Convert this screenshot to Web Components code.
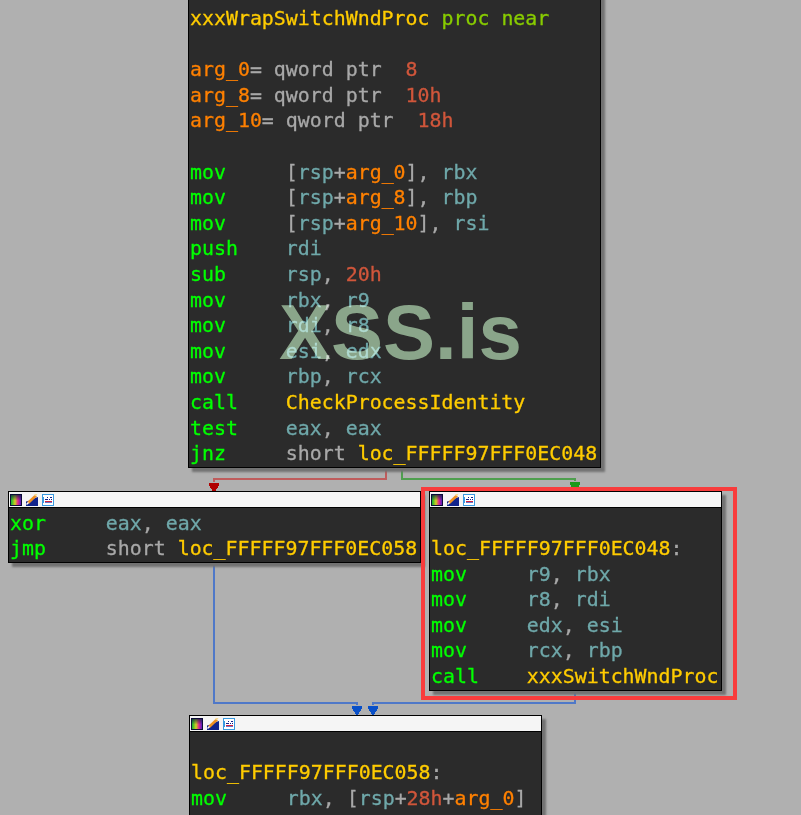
<!doctype html>
<html>
<head>
<meta charset="utf-8">
<title>graph</title>
<style>
html, body { margin: 0; padding: 0; background: #b0b0b0; }
</style>
</head>
<body>
<graph-canvas>
  <graph-edges></graph-edges>

  <graph-node bare x="188" y="-23" w="413">
    <asm-line></asm-line>
    <asm-line><span class="name">xxxWrapSwitchWndProc</span> <span class="kw">proc near</span></asm-line>
    <asm-line></asm-line>
    <asm-line><span class="arg">arg_0</span>= qword ptr  <span class="num">8</span></asm-line>
    <asm-line><span class="arg">arg_8</span>= qword ptr  <span class="num">10h</span></asm-line>
    <asm-line><span class="arg">arg_10</span>= qword ptr  <span class="num">18h</span></asm-line>
    <asm-line></asm-line>
    <asm-line><span class="op">mov     </span>[<span class="reg">rsp</span>+<span class="arg">arg_0</span>], <span class="reg">rbx</span></asm-line>
    <asm-line><span class="op">mov     </span>[<span class="reg">rsp</span>+<span class="arg">arg_8</span>], <span class="reg">rbp</span></asm-line>
    <asm-line><span class="op">mov     </span>[<span class="reg">rsp</span>+<span class="arg">arg_10</span>], <span class="reg">rsi</span></asm-line>
    <asm-line><span class="op">push    </span><span class="reg">rdi</span></asm-line>
    <asm-line><span class="op">sub     </span><span class="reg">rsp</span>, <span class="num">20h</span></asm-line>
    <asm-line><span class="op">mov     </span><span class="reg">rbx</span>, <span class="reg">r9</span></asm-line>
    <asm-line><span class="op">mov     </span><span class="reg">rdi</span>, <span class="reg">r8</span></asm-line>
    <asm-line><span class="op">mov     </span><span class="reg">esi</span>, <span class="reg">edx</span></asm-line>
    <asm-line><span class="op">mov     </span><span class="reg">rbp</span>, <span class="reg">rcx</span></asm-line>
    <asm-line><span class="op">call    </span><span class="name">CheckProcessIdentity</span></asm-line>
    <asm-line><span class="op">test    </span><span class="reg">eax</span>, <span class="reg">eax</span></asm-line>
    <asm-line><span class="op">jnz     </span>short <span class="name">loc_FFFFF97FFF0EC048</span></asm-line>
  </graph-node>

  <graph-node x="8" y="491" w="413">
    <asm-line><span class="op">xor     </span><span class="reg">eax</span>, <span class="reg">eax</span></asm-line>
    <asm-line><span class="op">jmp     </span>short <span class="name">loc_FFFFF97FFF0EC058</span></asm-line>
  </graph-node>

  <graph-node x="429" y="491" w="293">
    <asm-line></asm-line>
    <asm-line><span class="name">loc_FFFFF97FFF0EC048</span>:</asm-line>
    <asm-line><span class="op">mov     </span><span class="reg">r9</span>, <span class="reg">rbx</span></asm-line>
    <asm-line><span class="op">mov     </span><span class="reg">r8</span>, <span class="reg">rdi</span></asm-line>
    <asm-line><span class="op">mov     </span><span class="reg">edx</span>, <span class="reg">esi</span></asm-line>
    <asm-line><span class="op">mov     </span><span class="reg">rcx</span>, <span class="reg">rbp</span></asm-line>
    <asm-line><span class="op">call    </span><span class="name">xxxSwitchWndProc</span></asm-line>
  </graph-node>

  <graph-node x="189" y="715" w="353" h="140">
    <asm-line></asm-line>
    <asm-line><span class="name">loc_FFFFF97FFF0EC058</span>:</asm-line>
    <asm-line><span class="op">mov     </span><span class="reg">rbx</span>, [<span class="reg">rsp</span>+<span class="num">28h</span>+<span class="arg">arg_0</span>]</asm-line>
  </graph-node>

  <select-box x="421" y="487" w="316" h="213"></select-box>
  <water-mark>XSS.is</water-mark>
</graph-canvas>

<script>
// free canvas that holds the graph
class GraphCanvas extends HTMLElement {
  constructor() {
    super();
    this.attachShadow({ mode: "open" }).innerHTML = `
      <style>
        :host { display: block; position: relative; width: 801px; height: 815px; overflow: hidden; background: #b0b0b0; }
      </style>
      <slot></slot>`;
  }
}

class GraphNode extends HTMLElement {
  constructor() {
    super();
    this.attachShadow({ mode: "open" });
  }
  connectedCallback() {
    const bare = this.hasAttribute("bare");
    const h = this.getAttribute("h");
    const id = "g" + this.getAttribute("x");
    this.shadowRoot.innerHTML = `
      <style>
        :host {
          display: block; position: absolute; box-sizing: border-box;
          left: ${this.getAttribute("x")}px; top: ${this.getAttribute("y")}px; width: ${this.getAttribute("w")}px;
          ${h ? "height: " + h + "px;" : ""}
          border: 1px solid #000; background: #2b2b2b;
          box-shadow: 4px 4px 2px #727272;
          font: 19.9px "DejaVu Sans Mono", monospace; color: #a8a8a8;
          -webkit-text-stroke: .3px;
        }
        .title { display: flex; gap: 4px; align-items: center; height: 16px; padding-left: 1px; box-sizing: border-box; background: #f5f5f5; border-bottom: 1px solid #000; }
        .title svg { display: block; width: 12px; height: 12px; }
        .body { padding: 2.500px 1px .5px; }
      </style>
      ${bare ? "" : `<div class="title">
        <svg viewBox="0 0 12 12" shape-rendering="crispEdges">
          <defs>
            <linearGradient id="${id}" x1="0" y1="0" x2="1" y2="0">
              <stop offset="0" stop-color="#10b030"/><stop offset=".4" stop-color="#d0d020"/><stop offset=".7" stop-color="#e02090"/><stop offset="1" stop-color="#5020c0"/>
            </linearGradient>
            <linearGradient id="${id}d" x1="0" y1="0" x2="0" y2="1">
              <stop offset="0" stop-color="#102040" stop-opacity=".75"/><stop offset=".55" stop-color="#102040" stop-opacity="0"/>
            </linearGradient>
          </defs>
          <rect width="12" height="12" fill="#0c0c38"/>
          <rect x="1" y="1" width="10" height="10" fill="url(#${id})"/>
          <rect x="1" y="1" width="10" height="10" fill="url(#${id}d)"/>
        </svg>
        <svg viewBox="0 0 12 12">
          <path d="M0 12V7.500L4 6.500 9 4 12 3V12Z" fill="#12248c"/>
          <path d="M2 9 10 1.500" stroke="#f09020" stroke-width="2.600"/>
          <path d="M8.500 1.500 11 0" stroke="#f4d890" stroke-width="1.500"/>
          <path d="M.5 10.500 2.500 8.500" stroke="#fff" stroke-width="1.500"/>
        </svg>
        <svg viewBox="0 0 12 12" shape-rendering="crispEdges">
          <rect width="12" height="12" fill="#3a9ae0"/><rect x="1" y="1" width="10" height="10" fill="#fff"/>
          <path d="M5 3h1v1h-1zM8 3h2v1h-2zM3 5h3v1h-3zM7 5h1v1h-1zM9 5h1v1h-1z" fill="#10208c"/>
          <rect x="3" y="7" width="7" height="1" fill="#d02040"/>
          <rect x="3" y="8" width="7" height="1" fill="#6a78c8"/>
          <rect x="1" y="3" width="1" height="6" fill="#3a9ae0"/>
        </svg>
      </div>`}
      <div class="body"><slot></slot></div>`;
  }
}

// one row of a listing, tokens are passed in and coloured here
class AsmLine extends HTMLElement {
  constructor() {
    super();
    this.attachShadow({ mode: "open" }).innerHTML = `<style>
        :host { display: block; height: 25.6px; line-height: 25.6px; white-space: pre; }
        ::slotted(.op) { color: #00ff00; }
        ::slotted(.reg) { color: #6fa8aa; }
        ::slotted(.name) { color: #ffcc00; }
        ::slotted(.arg) { color: #ff8000; }
        ::slotted(.num) { color: #d0563b; }
        ::slotted(.kw) { color: #88cc00; }
      </style><slot></slot>`;
  }
}

class GraphEdges extends HTMLElement {
  constructor() {
    super();
    const edge = (pts, line, head) => {
      const last = pts[pts.length - 1];
      return `<polyline points="${pts.join(" ")}" fill="none" stroke="${line}" stroke-width="2"/>
        <path d="M${last[0] - 5} ${last[1] + 1}h10v2l-4 7h-2l-4-7z" fill="${head}"/>`;
    };
    this.attachShadow({ mode: "open" }).innerHTML = `
      <style>
        :host { display: block; position: absolute; left: 0; top: 0; }
        svg { display: block; }
      </style>
      <svg width="801" height="815" shape-rendering="crispEdges">
        ${edge([[386, 468], [386, 479], [214, 479], [214, 482]], "#bf5c5c", "#b00000")}
        ${edge([[402, 468], [402, 479], [575, 479], [575, 481]], "#4f9f4f", "#1a9a1a")}
        ${edge([[214, 563], [214, 703], [357, 703], [357, 705]], "#4f78c8", "#0a50c8")}
        ${edge([[575, 691], [575, 703], [373, 703], [373, 705]], "#4f78c8", "#0a50c8")}
      </svg>`;
  }
}

class SelectBox extends HTMLElement {
  constructor() {
    super();
    this.attachShadow({ mode: "open" });
  }
  connectedCallback() {
    this.shadowRoot.innerHTML = `
      <style>
        :host {
          display: block; position: absolute; box-sizing: border-box;
          left: ${this.getAttribute("x")}px; top: ${this.getAttribute("y")}px;
          width: ${this.getAttribute("w")}px; height: ${this.getAttribute("h")}px;
          border: 4px solid #f83c3c;
        }
      </style>`;
  }
}

class WaterMark extends HTMLElement {
  constructor() {
    super();
    this.attachShadow({ mode: "open" }).innerHTML = `
      <style>
        :host {
          display: block; position: absolute; left: 279px; top: 286px;
          font: bold 78px/92px "Liberation Sans", Arial, sans-serif;
          color: #729372; mix-blend-mode: screen; white-space: nowrap;
        }
      </style>
      <slot></slot>`;
  }
}

customElements.define("graph-canvas", GraphCanvas);
customElements.define("graph-node", GraphNode);
customElements.define("asm-line", AsmLine);
customElements.define("graph-edges", GraphEdges);
customElements.define("select-box", SelectBox);
customElements.define("water-mark", WaterMark);
</script>
</body>
</html>
